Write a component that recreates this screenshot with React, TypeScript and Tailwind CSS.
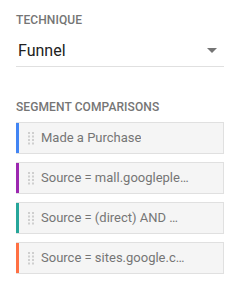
import React from "react";

const segments = [
  { label: "Made a Purchase", color: "bg-[#4285f4]" },
  { label: "Source = mall.googleple…", color: "bg-[#9c27b0]" },
  { label: "Source = (direct) AND …", color: "bg-[#26a69a]" },
  { label: "Source = sites.google.c…", color: "bg-[#ff7043]" },
];

function Handle() {
  const ys = [0, 3.5, 7, 10.5];
  return (
    <svg width="6" height="13" viewBox="0 0 6 13" className="shrink-0">
      {ys.map((y) => (
        <g key={y} fill="#cfcfcf">
          <rect x="0" y={y} width="2" height="2" />
          <rect x="4" y={y} width="2" height="2" />
        </g>
      ))}
    </svg>
  );
}

export default function App() {
  return (
    <div
      className="w-[241px] h-[291px] bg-white px-4 pt-3 overflow-hidden"
      style={{ fontFamily: "Roboto, 'Liberation Sans', sans-serif" }}
    >
      <div className="text-[12px] leading-4 font-medium text-[#757575] tracking-[0.1px]">TECHNIQUE</div>
      <div className="mt-[11px] w-[208px] flex items-center justify-between border-b border-[#e0e0e0] pb-[3px] pl-[2px]">
        <span className="text-[16px] leading-6 text-[#212121]">Funnel</span>
        <svg width="10" height="5" viewBox="0 0 10 5" className="mr-[7px] mt-[-1px]">
          <path d="M0 0 L10 0 L5 5 Z" fill="#757575" />
        </svg>
      </div>
      <div className="mt-[32px] text-[12px] leading-4 font-medium text-[#757575] tracking-[0.1px]">SEGMENT COMPARISONS</div>
      <div className="mt-[7px] flex flex-col gap-2 w-[208px]">
        {segments.map((s) => (
          <div key={s.label} className="flex h-8 bg-[#f5f5f5] border border-[#e0e0e0] border-l-0">
            <div className={`w-[3px] shrink-0 ${s.color}`} />
            <div className="flex items-center pl-[9px] pr-8 min-w-0">
              <Handle />
              <span className="ml-[7px] text-[13px] text-[#757575] truncate">{s.label}</span>
            </div>
          </div>
        ))}
      </div>
    </div>
  );
}
